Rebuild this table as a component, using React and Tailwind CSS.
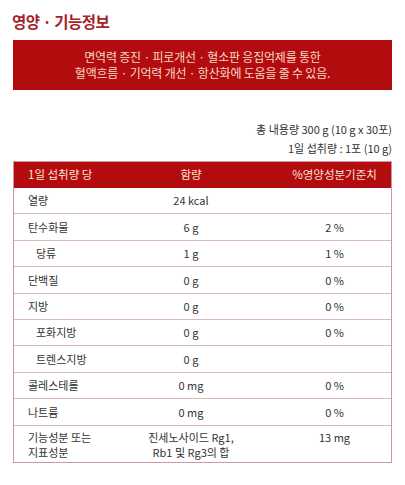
import React from 'react';

const rows = [
  { name: '열량', amount: '24 kcal', daily: '' },
  { name: '탄수화물', amount: '6 g', daily: '2 %' },
  { name: '당류', amount: '1 g', daily: '1 %', sub: true },
  { name: '단백질', amount: '0 g', daily: '0 %' },
  { name: '지방', amount: '0 g', daily: '0 %' },
  { name: '포화지방', amount: '0 g', daily: '0 %', sub: true },
  { name: '트렌스지방', amount: '0 g', daily: '', sub: true },
  { name: '콜레스테롤', amount: '0 mg', daily: '0 %' },
  { name: '나트륨', amount: '0 mg', daily: '0 %' },
];

const App = () => {
  return (
    <div
      className="w-[405px] h-[485px] bg-white px-[13px] pt-[9px] text-[#333]"
      style={{ fontFamily: '"Noto Sans CJK KR", "Noto Sans", sans-serif' }}
    >
      <h2 className="text-[15.5px] font-bold text-[#a51f2d] tracking-[-0.5px] leading-[24px] -ml-[1px]">
        영양 · 기능정보
      </h2>

      {/* Banner */}
      <div className="mt-[7px] h-[50px] bg-[#b30c0f] flex flex-col items-center justify-center text-[12px] leading-[16px] text-[#f6d9c4] tracking-[-0.2px]">
        <p>면역력 증진 · 피로개선 · 혈소판 응집억제를 통한</p>
        <p>혈액흐름 · 기억력 개선 · 항산화에 도움을 줄 수 있음.</p>
      </div>

      <div className="mt-[30px] text-right text-[11px] leading-[19px] text-[#333]">
        <p>총 내용량 300 g (10 g x 30포)</p>
        <p>1일 섭취량 : 1포 (10 g)</p>
      </div>

      {/* Table */}
      <div className="mt-[3px] border border-[#c99aa3] text-[11px]">
        <div className="grid grid-cols-[90px_174px_1fr] h-[26px] items-center bg-[#b30c0f] text-[#f8e4d4] text-[11.5px]">
          <div className="pl-[14px]">1일 섭취량 당</div>
          <div className="text-center">함량</div>
          <div className="text-center">%영양성분기준치</div>
        </div>
        {rows.map((r) => (
          <div
            key={r.name}
            className="grid grid-cols-[90px_174px_1fr] h-[26.4px] items-center border-b border-[#d9b7bd]"
          >
            <div className={r.sub ? 'pl-[22px]' : 'pl-[14px]'}>{r.name}</div>
            <div className="text-center">{r.amount}</div>
            <div className="text-center">{r.daily}</div>
          </div>
        ))}
        <div className="grid grid-cols-[90px_174px_1fr] h-[36px] pt-[4px] leading-[15px]">
          <div className="pl-[14px]">
            <p>기능성분 또는</p>
            <p>지표성분</p>
          </div>
          <div className="text-center">
            <p>진세노사이드 Rg1,</p>
            <p>Rb1 및 Rg3의 합</p>
          </div>
          <div className="text-center">13 mg</div>
        </div>
      </div>
    </div>
  );
};

export default App;
